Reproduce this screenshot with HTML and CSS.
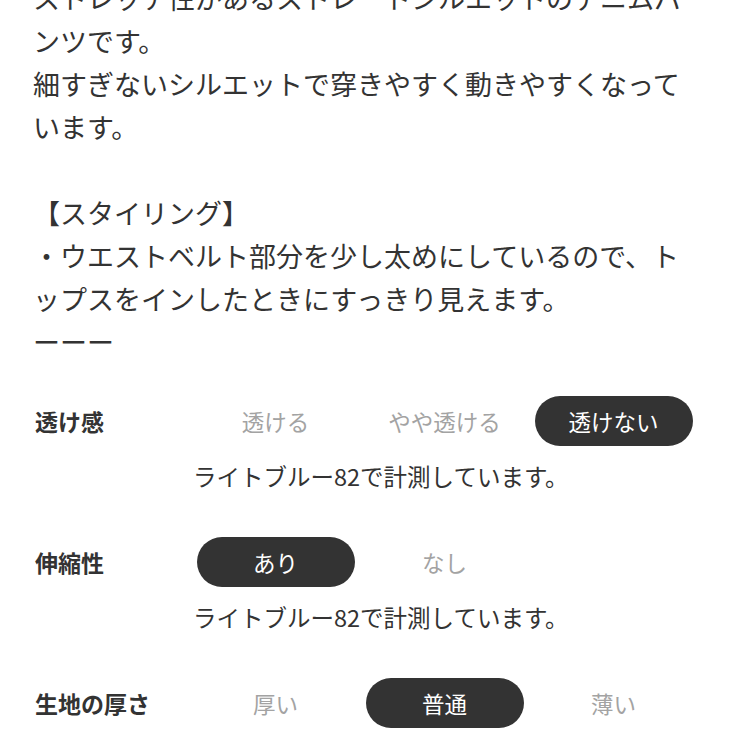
FILE: index.html
```html
<!DOCTYPE html>
<html lang="ja">
<head>
  <meta charset="UTF-8">
  <title>商品詳細</title>
  <meta name="viewport" content="width=device-width, initial-scale=1.0">
  <link rel="stylesheet" href="styles.css">
</head>
<body>
  <div class="description">
    ストレッチ性があるストレートシルエットのデニムパ<br>
    ンツです。<br>
    細すぎないシルエットで穿きやすく動きやすくなって<br>
    います。<br>
    <br>
    【スタイリング】<br>
    ・ウエストベルト部分を少し太めにしているので、ト<br>
    ップスをインしたときにすっきり見えます。<br>
    ーーー
  </div>

  <!-- 素材の特徴 -->
  <div class="specs">
    <div class="spec">
      <div class="spec-head">
        <div class="spec-label">透け感</div>
        <div class="options">
          <span class="opt">透ける</span>
          <span class="opt">やや透ける</span>
          <span class="opt active">透けない</span>
        </div>
      </div>
      <p class="spec-note">ライトブルー82で計測しています。</p>
    </div>

    <div class="spec">
      <div class="spec-head">
        <div class="spec-label">伸縮性</div>
        <div class="options">
          <span class="opt active">あり</span>
          <span class="opt">なし</span>
        </div>
      </div>
      <p class="spec-note">ライトブルー82で計測しています。</p>
    </div>

    <div class="spec">
      <div class="spec-head">
        <div class="spec-label">生地の厚さ</div>
        <div class="options">
          <span class="opt">厚い</span>
          <span class="opt active">普通</span>
          <span class="opt">薄い</span>
        </div>
      </div>
    </div>
  </div>
</body>
</html>
```

FILE: styles.css
```css
body {
  font-family: "Noto Sans CJK JP", "Noto Sans", sans-serif;
  background: #fff;
  color: #333;
  margin: 0;
  overflow: hidden;
}

.description {
  margin-top: -24px;
  padding-left: 33px;
  font-size: 27px;
  line-height: 43px;
  white-space: nowrap;
}

.specs {
  margin-top: 33px;
}

.spec {
  padding-left: 35px;
  margin-bottom: 45px;
}

.spec:last-child {
  margin-bottom: 0;
}

.spec-head {
  display: flex;
  align-items: center;
}

.spec-label {
  width: 156px;
  font-size: 23px;
  font-weight: bold;
}

.options {
  display: grid;
  grid-template-columns: repeat(3, 169px);
}

.opt {
  height: 50px;
  margin: 0 5.5px;
  border-radius: 25px;
  display: flex;
  align-items: center;
  justify-content: center;
  font-size: 22.5px;
  color: #a3a3a3;
}

.opt.active {
  background: #333;
  color: #fff;
}

.spec-note {
  margin: 14px 0 0 158px;
  font-size: 23.5px;
  line-height: 32px;
}
```
